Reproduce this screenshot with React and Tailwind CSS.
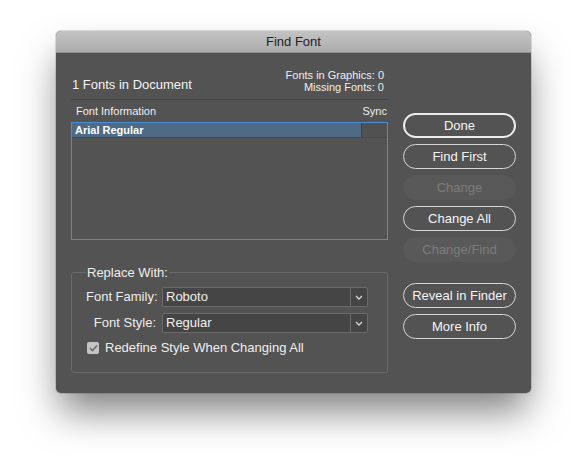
import React from "react";

const font = { fontFamily: '"Liberation Sans", Arial, sans-serif' };

function Chevron() {
    return (
        <svg width="8" height="5" viewBox="0 0 8 5" className="text-[#d8d8d8]">
            <path d="M1 1 L4 4 L7 1" fill="none" stroke="currentColor" strokeWidth="1.3" />
        </svg>
    );
}

function Dropdown({ value }) {
    return (
        <div className="flex h-[20px] w-[206px] items-stretch rounded-[2px] border border-[#6b6b6b] bg-[#454545]">
            <div className="flex flex-1 items-center pl-[3px] text-[13px] text-[#f0f0f0]">{value}</div>
            <div className="flex w-[17px] items-center justify-center border-l border-[#6b6b6b]">
                <Chevron />
            </div>
        </div>
    );
}

function Btn({ children, primary, disabled }) {
    let cls = "border border-[#d6d6d6] text-[#f4f4f4]";
    if (primary) cls = "border-2 border-[#ececec] text-[#f4f4f4]";
    if (disabled) cls = "border border-[#595959] bg-[#595959] text-[#7c7c7c]";
    return (
        <div className={`flex h-[25px] w-[113px] items-center justify-center rounded-full text-[13px] ${cls}`}>
            {children}
        </div>
    );
}

export default function App() {
    return (
        <div className="h-[474px] w-[587px] bg-white pl-[56px] pt-[31px]" style={font}>
            <div className="h-[362px] w-[475px] overflow-hidden rounded-[5px] bg-[#535353] shadow-[0_22px_38px_-4px_rgba(0,0,0,0.5),0_0_0_1px_rgba(0,0,0,0.12)]">
                {/* title bar */}
                <div className="flex h-[22px] items-center justify-center border-b border-[#8f8f8f] bg-gradient-to-b from-[#c4c3c4] to-[#aeadae] text-[13px] text-[#222]">
                    Find Font
                </div>

                <div className="flex gap-[15px] px-[15px] pt-[16px]">
                    {/* left column */}
                    <div className="w-[317px]">
                        <div className="flex items-end justify-between border-b border-[#444] pb-[6px] pl-[1px]">
                            <div className="text-[13px] leading-[16px] text-[#f2f2f2]">1 Fonts in Document</div>
                            <div className="pr-[4px] text-right text-[11px] leading-[12px] text-[#eee]">
                                <div>Fonts in Graphics: 0</div>
                                <div>Missing Fonts: 0</div>
                            </div>
                        </div>

                        <div className="flex h-[22px] items-center justify-between pl-[5px] pr-[1px] text-[11px] text-[#eee]">
                            <span>Font Information</span>
                            <span>Sync</span>
                        </div>

                        <div className="h-[118px] border border-[#4a8fd6] bg-[#535353]">
                            <div className="flex h-[15px] border-b border-[#484848]">
                                <div className="flex flex-1 items-center bg-[#4e6a85] pl-[3px] text-[11px] font-bold text-white">
                                    Arial Regular
                                </div>
                                <div className="w-[26px] border-l border-[#404040] bg-[#515151]" />
                            </div>
                        </div>

                        <fieldset className="mt-[25px] h-[108px] w-[317px] min-w-0 rounded-[3px] border border-[#6a6a6a] pl-[14px] pr-[19px]">
                            <legend className="ml-[0px] px-[1px] text-[13px] leading-[15px] text-[#eee]">
                                Replace With:
                            </legend>
                            <div className="mt-[7px] grid grid-cols-[70px_206px] items-center gap-x-[6px] gap-y-[6px] whitespace-nowrap text-[13px] text-[#eee]">
                                <div className="text-right">Font Family:</div>
                                <Dropdown value="Roboto" />
                                <div className="text-right">Font Style:</div>
                                <Dropdown value="Regular" />
                            </div>
                            <div className="mt-[5px] flex items-center gap-[6px] pl-[1px] text-[13px] text-[#eee]">
                                <div className="flex h-[12px] w-[12px] items-center justify-center rounded-[2px] bg-[#c4c4c4]">
                                    <svg width="9" height="8" viewBox="0 0 9 8">
                                        <path d="M1 4 L3.5 6.5 L8 1.5" fill="none" stroke="#6a6a6a" strokeWidth="1.6" />
                                    </svg>
                                </div>
                                <span>Redefine Style When Changing All</span>
                            </div>
                        </fieldset>
                    </div>

                    {/* right column */}
                    <div className="flex flex-col pt-[44px]">
                        <div className="flex flex-col gap-[6px]">
                            <Btn primary>Done</Btn>
                            <Btn>Find First</Btn>
                            <Btn disabled>Change</Btn>
                            <Btn>Change All</Btn>
                            <Btn disabled>Change/Find</Btn>
                        </div>
                        <div className="mt-[21px] flex flex-col gap-[6px]">
                            <Btn>Reveal in Finder</Btn>
                            <Btn>More Info</Btn>
                        </div>
                    </div>
                </div>
            </div>
        </div>
    );
}
